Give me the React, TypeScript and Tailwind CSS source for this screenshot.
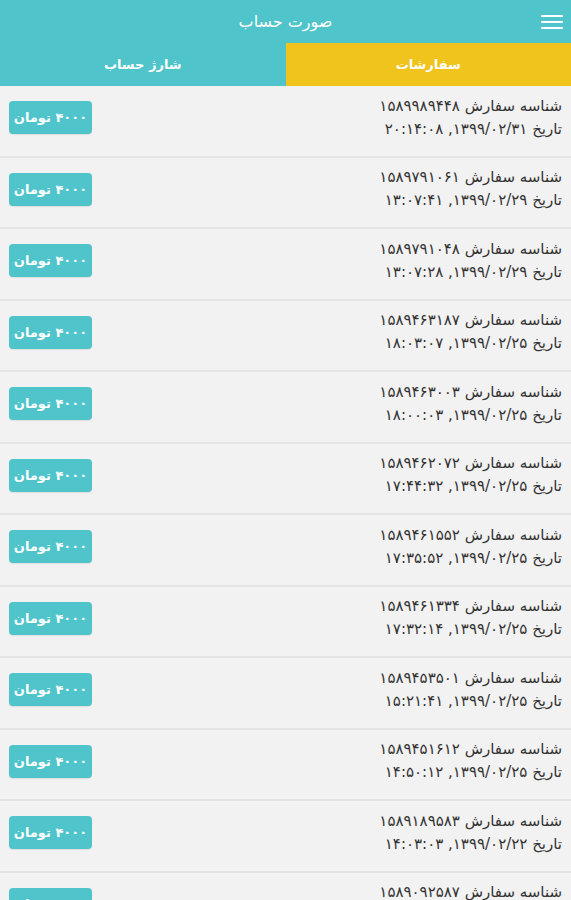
import React from 'react'

interface Order {
  id: string
  date: string
  time: string
}

const orders: Order[] = [
  { id: '۱۵۸۹۹۸۹۴۴۸', date: '۱۳۹۹/۰۲/۳۱', time: '۲۰:۱۴:۰۸' },
  { id: '۱۵۸۹۷۹۱۰۶۱', date: '۱۳۹۹/۰۲/۲۹', time: '۱۳:۰۷:۴۱' },
  { id: '۱۵۸۹۷۹۱۰۴۸', date: '۱۳۹۹/۰۲/۲۹', time: '۱۳:۰۷:۲۸' },
  { id: '۱۵۸۹۴۶۳۱۸۷', date: '۱۳۹۹/۰۲/۲۵', time: '۱۸:۰۳:۰۷' },
  { id: '۱۵۸۹۴۶۳۰۰۳', date: '۱۳۹۹/۰۲/۲۵', time: '۱۸:۰۰:۰۳' },
  { id: '۱۵۸۹۴۶۲۰۷۲', date: '۱۳۹۹/۰۲/۲۵', time: '۱۷:۴۴:۳۲' },
  { id: '۱۵۸۹۴۶۱۵۵۲', date: '۱۳۹۹/۰۲/۲۵', time: '۱۷:۳۵:۵۲' },
  { id: '۱۵۸۹۴۶۱۳۳۴', date: '۱۳۹۹/۰۲/۲۵', time: '۱۷:۳۲:۱۴' },
  { id: '۱۵۸۹۴۵۳۵۰۱', date: '۱۳۹۹/۰۲/۲۵', time: '۱۵:۲۱:۴۱' },
  { id: '۱۵۸۹۴۵۱۶۱۲', date: '۱۳۹۹/۰۲/۲۵', time: '۱۴:۵۰:۱۲' },
  { id: '۱۵۸۹۱۸۹۵۸۳', date: '۱۳۹۹/۰۲/۲۲', time: '۱۴:۰۳:۰۳' },
  { id: '۱۵۸۹۰۹۲۵۸۷', date: '۱۳۹۹/۰۲/۲۱', time: '۱۰:۲۳:۰۷' },
]

function OrderRow({ order }: { order: Order }) {
  return (
    <div className="h-[71.5px] box-border flex items-center justify-between pt-[8px] pb-[14px] pr-[9px] pl-[9px] border-b-2 border-[#e4e4e4]">
      <div className="text-[15px] leading-[23px] text-[#333]">
        <div>شناسه سفارش {order.id}</div>
        <div>
          تاریخ {order.date}, {order.time}
        </div>
      </div>
      {/* Amount pill */}
      <div className="w-[83px] h-[33px] rounded-[4px] bg-[#4fc4ca] text-white font-bold text-[13px] flex items-center justify-center shadow-[0_1px_1px_rgba(0,0,0,0.08)]">
        ۴۰۰۰ تومان
      </div>
    </div>
  )
}

export default function App() {
  return (
    <div
      dir="rtl"
      className="w-[571px] h-[900px] overflow-hidden bg-[#f2f2f2] font-['DejaVu_Sans',sans-serif]"
    >
      <header className="h-[43px] bg-[#4fc4ca] flex items-center relative">
        <div className="w-[38px] flex items-center justify-center">
          <div className="flex flex-col gap-[4px] w-[22px]">
            <span className="h-[2px] rounded-full bg-white" />
            <span className="h-[2px] rounded-full bg-white" />
            <span className="h-[2px] rounded-full bg-white" />
          </div>
        </div>
        <h1 className="absolute inset-x-0 text-center text-white text-[16px] pointer-events-none">
          صورت حساب
        </h1>
      </header>
      <nav className="grid grid-cols-2 h-[43px] text-white text-[13px] font-bold">
        <div className="bg-[#f1c31d] flex items-center justify-center">سفارشات</div>
        <div className="bg-[#4fc4ca] flex items-center justify-center">شارژ حساب</div>
      </nav>
      <div>
        {orders.map((o) => (
          <OrderRow key={o.id} order={o} />
        ))}
      </div>
    </div>
  )
}
